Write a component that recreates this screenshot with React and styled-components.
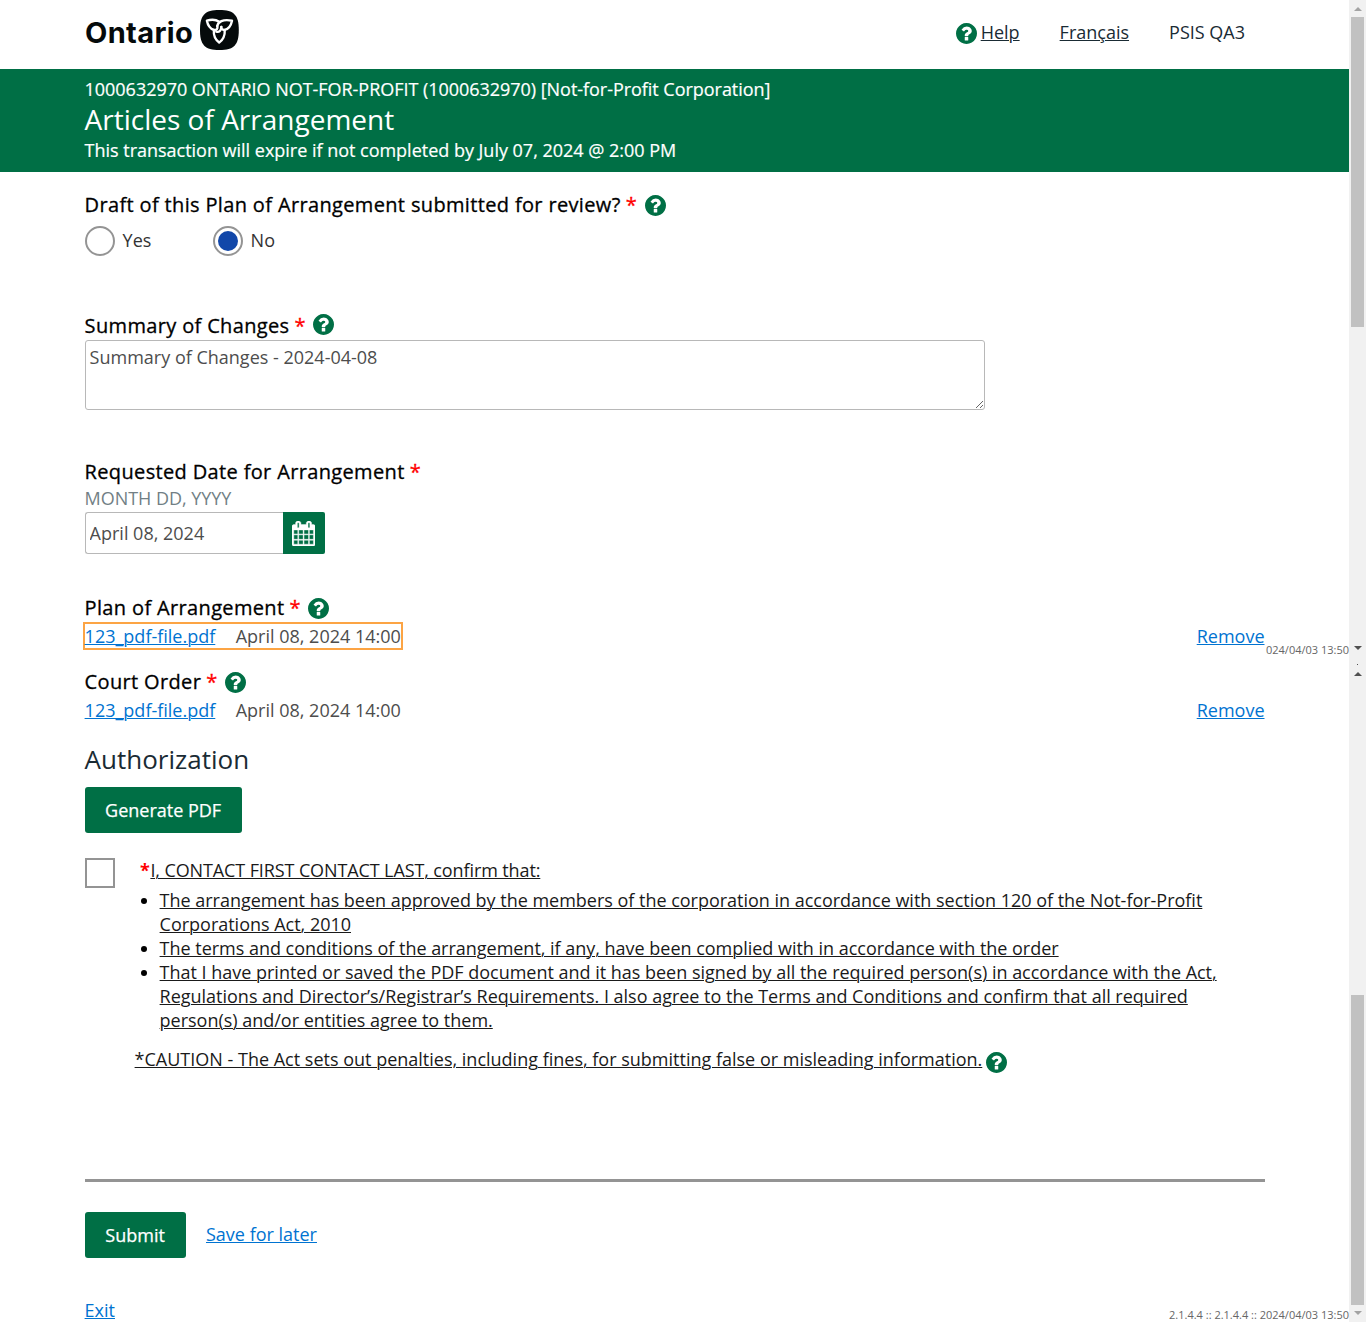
import React from "react";
import styled, { createGlobalStyle } from "styled-components";

const Global = createGlobalStyle`
  *, *::before, *::after { box-sizing: border-box; }
  html, body { margin: 0; padding: 0; background: #fff; }
  body { font-family: "Open Sans", "Noto Sans", sans-serif; font-size: 18px; line-height: 24px; color: #1a1a1a; overflow: hidden; }
  ul, h1, h2, p { margin: 0; padding: 0; font-weight: 400; }
  button, input, textarea { font-family: inherit; font-size: inherit; }
`;

const Page = styled.div`
  display: flex;
  width: 1366px;
  height: 1322px;
  overflow: hidden;
`;
const Main = styled.div`
  position: relative;
  width: 1349px;
  height: 1322px;
`;
const TopBar = styled.header`
  display: flex;
  justify-content: space-between;
  height: 69px;
  padding: 10px 104px 0 85px;
`;
const Brand = styled.div`
  display: flex;
  align-items: flex-start;
  height: 40px;
`;
const Wordmark = styled.span`
  width: 115px;
  font: 700 29px/46px Inter, sans-serif;
  letter-spacing: 0.35px;
  color: #050a0b;
  white-space: nowrap;
`;
const TopNav = styled.nav`
  display: flex;
  align-items: center;
  height: 24px;
  margin-top: 10px;
  color: #1a2b34;
`;
const NavLink = styled.a`
  color: #1a2b34;
  text-decoration: underline;
  text-decoration-thickness: 1px;
  text-underline-offset: 1px;
  margin-left: ${(p) => p.$gap}px;
`;
const NavUser = styled.span`
  margin-left: 40px;
`;
const Banner = styled.section`
  height: 103px;
  padding: 8px 84.6px 0;
  background: #006f45;
  color: #fff;
  white-space: nowrap;
`;
const BannerLine = styled.div`
  letter-spacing: ${(p) => p.$tracking || 0}px;
  -webkit-text-stroke: 0.2px #fff;
`;
const BannerTitle = styled.h1`
  font-size: 28px;
  line-height: 37px;
`;
const Form = styled.main`
  display: flex;
  flex-direction: column;
  width: 1265px;
  padding: 18px 0 0 84.6px;
`;
const Field = styled.section`
  height: ${(p) => p.$height}px;
`;
const Label = styled.div`
  display: flex;
  align-items: center;
  height: 28px;
  padding-top: 2px;
  font-size: 20px;
  line-height: 28px;
  letter-spacing: 0.35px;
  color: #000;
  -webkit-text-stroke: 0.3px currentColor;
  white-space: nowrap;
`;
const Star = styled.span`
  color: #f00;
  margin: 0 7.5px 0 5px;
`;
const HelpDot = styled.svg`
  display: block;
  flex: none;
  width: 21px;
  height: 21px;
  margin-top: ${(p) => p.$drop || 0}px;
  fill: #006f45;
  stroke: none;
`;
const Radios = styled.div`
  display: flex;
  margin-top: 8px;
`;
const RadioOption = styled.label`
  display: flex;
  width: 128px;
  color: #333;
`;
const RadioRing = styled.span`
  display: flex;
  align-items: center;
  justify-content: center;
  width: 30px;
  height: 30px;
  margin-right: 8px;
  border: 2px solid #949494;
  border-radius: 50%;
  &::after {
    content: "";
    width: 20px;
    height: 20px;
    border-radius: 50%;
    background: ${(p) => (p.$on ? "#1147a9" : "transparent")};
  }
`;
const RadioText = styled.span`
  padding-top: 2px;
`;
const SummaryBox = styled.textarea`
  display: block;
  width: 900px;
  height: 70px;
  margin-top: 1px;
  padding: 4px;
  border: 1px solid #b8b8b8;
  border-radius: 3px;
  line-height: 24px;
  color: #4d4d4d;
  outline: 0;
`;
const Hint = styled.div`
  margin-top: 1px;
  letter-spacing: -0.04px;
  color: #727f85;
`;
const DateRow = styled.div`
  display: flex;
  margin-top: 2px;
`;
const DateInput = styled.input`
  width: 198px;
  height: 42px;
  padding: 0 4px;
  border: 1px solid #b8b8b8;
  border-right: 0;
  border-radius: 3px 0 0 3px;
  color: #4d4d4d;
`;
const CalendarButton = styled.button`
  display: flex;
  align-items: center;
  justify-content: center;
  width: 42px;
  height: 42px;
  padding: 0;
  border: 0;
  border-radius: 0 2px 2px 0;
  background: #006f45;
`;
const FileRow = styled.div`
  display: flex;
  justify-content: space-between;
  height: 28px;
  margin-top: 1px;
`;
const FileInfo = styled.div`
  display: flex;
  height: 28px;
  width: 320px;
  margin-left: -2px;
  border: 2px solid ${(p) => (p.$focused ? "#fca444" : "transparent")};
  color: #4d4d4d;
  white-space: nowrap;
`;
const FileDate = styled.span`
  margin-left: 20.4px;
`;
const Link = styled.a`
  color: #0073d1;
  text-decoration: underline;
  text-decoration-thickness: 1px;
  text-underline-offset: 1px;
`;
const RemoveLink = styled(Link)`
  margin: 2px 0.5px 0 0;
`;
const SectionTitle = styled.h2`
  height: 46px;
  font-size: 26px;
  line-height: 36px;
  color: #1a2b34;
`;
const Button = styled.button`
  width: ${(p) => p.$width}px;
  height: 46px;
  padding: 0;
  border: 0;
  border-radius: 3px;
  background: #006f45;
  color: #fff;
  -webkit-text-stroke: 0.25px #fff;
`;
const Consent = styled.section`
  display: flex;
  height: 321px;
  margin-top: 25px;
`;
const CheckBox = styled.span`
  flex: none;
  width: 30px;
  height: 30px;
  border: 2px solid #949494;
`;
const ConsentText = styled.div`
  width: 1130px;
  margin-left: 20px;
  white-space: nowrap;
`;
const Underlined = styled.span`
  text-decoration: underline;
  text-decoration-thickness: 1px;
  text-underline-offset: 1px;
  letter-spacing: ${(p) => p.$tracking || 0}px;
`;
const ConsentLead = styled.p`
  padding-left: 5.4px;
`;
const LeadStar = styled.span`
  margin-right: 0.6px;
  color: #f00;
  font-weight: 700;
`;
const Terms = styled.ul`
  margin: 6px 0 15px;
  padding-left: 25px;
  list-style: none;
`;
const Term = styled.li`
  display: flex;
  &::before {
    content: "";
    flex: none;
    width: 6px;
    height: 6px;
    margin: 10px 13px 0 -19px;
    border-radius: 50%;
    background: #000;
  }
`;
const Caution = styled.p`
  display: flex;
  gap: 3.4px;
`;
const Rule = styled.hr`
  width: 1180px;
  height: 3px;
  margin: 0 0 30px;
  border: 0;
  background: #949494;
`;
const Actions = styled.div`
  display: flex;
  gap: 20.4px;
  height: 86px;
`;
const ActionLink = styled(Link)`
  padding-top: 10px;
  height: 40px;
`;
const Build = styled.div`
  position: absolute;
  right: 0;
  top: ${(p) => p.$top}px;
  height: 16px;
  font-size: 11px;
  line-height: 16px;
  color: #666;
  white-space: nowrap;
`;
const Gutter = styled.aside`
  display: flex;
  flex-direction: column;
  width: 17px;
  height: 1322px;
  background: #f1f1f1;
`;
const Track = styled.div`
  display: flex;
  flex-direction: column;
  align-items: center;
  height: 661px;
  padding-top: ${(p) => p.$pad}px;
`;
const Thumb = styled.div`
  width: 13px;
  height: 310px;
  margin: ${(p) => p.$before}px 0 ${(p) => p.$after}px;
  background: #c1c1c1;
`;
const Arrow = styled.i`
  width: 0;
  height: 0;
  border: 4px solid transparent;
  border-top: ${(p) => (p.$down ? `4px solid ${p.$color}` : "0")};
  border-bottom: ${(p) => (p.$down ? "0" : `4px solid ${p.$color}`)};
`;
const Speck = styled.i`
  width: 1px;
  height: 1px;
  margin-bottom: 7px;
  background: #505050;
`;

const HelpIcon = (props) => (
  <HelpDot viewBox="128 128 1536 1536" {...props}>
    <path d="M1024 1376v-192q0-14-9-23t-23-9h-192q-14 0-23 9t-9 23v192q0 14 9 23t23 9h192q14 0 23-9t9-23zm256-672q0-88-55.5-163t-138.5-116-170-41q-243 0-371 213-15 24 8 42l132 100q7 6 19 6 16 0 25-12 53-68 86-92 34-24 86-24 48 0 85.5 26t37.5 59q0 38-20 61t-68 45q-63 28-115.5 86.5t-52.5 125.5v36q0 14 9 23t23 9h192q14 0 23-9t9-23q0-19 21.5-49.5t54.5-49.5q32-18 49-28.5t46-35 44.5-48 28-60.5 12.5-81zm384 192q0 209-103 385.5t-279.5 279.5-385.5 103-385.5-103-279.5-279.5-103-385.5 103-385.5 279.5-279.5 385.5-103 385.5 103 279.5 279.5 103 385.5z" />
  </HelpDot>
);

const CalendarIcon = () => (
  <svg width="23.2" height="25" viewBox="0 0 1664 1792" fill="#fff" stroke="#fff" strokeWidth="30">
    <path d="M128 1664h288v-288h-288v288zm352 0h320v-288h-320v288zm-352-352h288v-320h-288v320zm352 0h320v-320h-320v320zm-352-384h288v-288h-288v288zm736 736h320v-288h-320v288zm-384-736h320v-288h-320v288zm768 736h288v-288h-288v288zm-384-352h320v-320h-320v320zm-352-864v-288q0-13-9.500-22.500t-22.500-9.500h-64q-13 0-22.500 9.500t-9.500 22.500v288q0 13 9.500 22.500t22.500 9.500h64q13 0 22.500-9.500t9.500-22.500zm736 864h288v-320h-288v320zm-384-384h320v-288h-320v288zm384 0h288v-288h-288v288zm32-480v-288q0-13-9.500-22.500t-22.500-9.500h-64q-13 0-22.500 9.500t-9.500 22.500v288q0 13 9.500 22.500t22.500 9.500h64q13 0 22.500-9.500t9.500-22.500zm384-64v1280q0 52-38 90t-90 38h-1408q-52 0-90-38t-38-90v-1280q0-52 38-90t90-38h128v-96q0-66 47-113t113-47h64q66 0 113 47t47 113v96h384v-96q0-66 47-113t113-47h64q66 0 113 47t47 113v96h128q52 0 90 38t38 90z" />
  </svg>
);

const Trillium = () => (
  <svg width="39" height="40" viewBox="0 0 39 40">
    <path d="M19.400 0C34 0 38.800 5 38.800 20S34 40 19.400 40 0 35 0 20 4.800 0 19.400 0z" fill="#050a0b" />
    <g fill="none" stroke="#fff" strokeWidth="2.2" strokeLinejoin="round" strokeLinecap="round" transform="translate(19.4 21) scale(1.07) translate(-19.4 -21.400)">
      <path d="M19.300 12.700C16 10.700 11.500 10.600 7.700 11.800C8.500 15.800 10.800 19.200 14.200 20.400C16.800 20.700 18.200 19.200 17.400 16.800" />
      <path d="M17.400 16.800C18 13 22.500 10 31.200 11.800C30.200 16.500 27.800 19.600 24.400 20.400C22.200 20.600 20.800 19.400 21.200 17.500" />
      <path d="M14.200 20.400C13.800 25.500 15.500 29.500 19.200 32.300C23 29.500 24.700 25.500 24.400 20.400M16.500 22C19 22.800 21 21.500 21.200 17.500" />
    </g>
  </svg>
);

const FieldLabel = ({ children, help, drop }) => (
  <Label>
    {children}
    <Star>*</Star>
    {help && <HelpIcon $drop={drop} />}
  </Label>
);

const Upload = ({ focused }) => (
  <FileRow>
    <FileInfo $focused={focused}>
      <Link>123_pdf-file.pdf</Link>
      <FileDate>April 08, 2024 14:00</FileDate>
    </FileInfo>
    <RemoveLink>Remove</RemoveLink>
  </FileRow>
);

export default function App() {
  return (
    <Page>
      <Global />
      <Main>
        <TopBar>
          <Brand>
            <Wordmark>Ontario</Wordmark>
            <Trillium />
          </Brand>
          <TopNav>
            <HelpIcon $drop={2} />
            <NavLink $gap={4}>Help</NavLink>
            <NavLink $gap={40}>Français</NavLink>
            <NavUser>PSIS QA3</NavUser>
          </TopNav>
        </TopBar>
        <Banner>
          <BannerLine $tracking={-0.035}>1000632970 ONTARIO NOT-FOR-PROFIT (1000632970) [Not-for-Profit Corporation]</BannerLine>
          <BannerTitle>Articles of Arrangement</BannerTitle>
          <BannerLine $tracking={-0.015}>This transaction will expire if not completed by July 07, 2024 @ 2:00 PM</BannerLine>
        </Banner>
        <Form>
          <Field $height={121}>
            <FieldLabel help>Draft of this Plan of Arrangement submitted for review?</FieldLabel>
            <Radios>
              <RadioOption><RadioRing /><RadioText>Yes</RadioText></RadioOption>
              <RadioOption><RadioRing $on /><RadioText>No</RadioText></RadioOption>
            </Radios>
          </Field>
          <Field $height={146}>
            <FieldLabel help drop={-3}>Summary of Changes</FieldLabel>
            <SummaryBox defaultValue="Summary of Changes - 2024-04-08" />
          </Field>
          <Field $height={136}>
            <FieldLabel>Requested Date for Arrangement</FieldLabel>
            <Hint>MONTH DD, YYYY</Hint>
            <DateRow>
              <DateInput defaultValue="April 08, 2024" />
              <CalendarButton><CalendarIcon /></CalendarButton>
            </DateRow>
          </Field>
          <Field $height={74}>
            <FieldLabel help>Plan of Arrangement</FieldLabel>
            <Upload focused />
          </Field>
          <Field $height={74}>
            <FieldLabel help>Court Order</FieldLabel>
            <Upload />
          </Field>
          <SectionTitle>Authorization</SectionTitle>
          <Button $width={157}>Generate PDF</Button>
          <Consent>
            <CheckBox />
            <ConsentText>
              <ConsentLead>
                <LeadStar>*</LeadStar>
                <Underlined $tracking={-0.11}>I, CONTACT FIRST CONTACT LAST, confirm that:</Underlined>
              </ConsentLead>
              <Terms>
                <Term>
                  <Underlined $tracking={-0.015}>
                    The arrangement has been approved by the members of the corporation in accordance with section 120 of the Not-for-Profit
                    <br />Corporations Act, 2010
                  </Underlined>
                </Term>
                <Term>
                  <Underlined $tracking={-0.02}>The terms and conditions of the arrangement, if any, have been complied with in accordance with the order</Underlined>
                </Term>
                <Term>
                  <Underlined $tracking={-0.012}>
                    That I have printed or saved the PDF document and it has been signed by all the required person(s) in accordance with the Act,
                    <br />Regulations and Director’s/Registrar’s Requirements. I also agree to the Terms and Conditions and confirm that all required
                    <br />person(s) and/or entities agree to them.
                  </Underlined>
                </Term>
              </Terms>
              <Caution>
                <Underlined>*CAUTION - The Act sets out penalties, including fines, for submitting false or misleading information.</Underlined>
                <HelpIcon $drop={5} />
              </Caution>
            </ConsentText>
          </Consent>
          <Rule />
          <Actions>
            <Button $width={101}>Submit</Button>
            <ActionLink>Save for later</ActionLink>
          </Actions>
          <div><Link>Exit</Link></div>
        </Form>
        <Build $top={642}>024/04/03 13:50</Build>
        <Build $top={1307}>2.1.4.4 :: 2.1.4.4 :: 2024/04/03 13:50</Build>
      </Main>
      <Gutter>
        <Track $pad={7}>
          <Arrow $color="#a3a3a3" />
          <Thumb $before={6} $after={319} />
          <Arrow $down $color="#505050" />
        </Track>
        <Track $pad={3}>
          <Speck />
          <Arrow $color="#505050" />
          <Thumb $before={319} $after={6} />
          <Arrow $down $color="#a3a3a3" />
        </Track>
      </Gutter>
    </Page>
  );
}
